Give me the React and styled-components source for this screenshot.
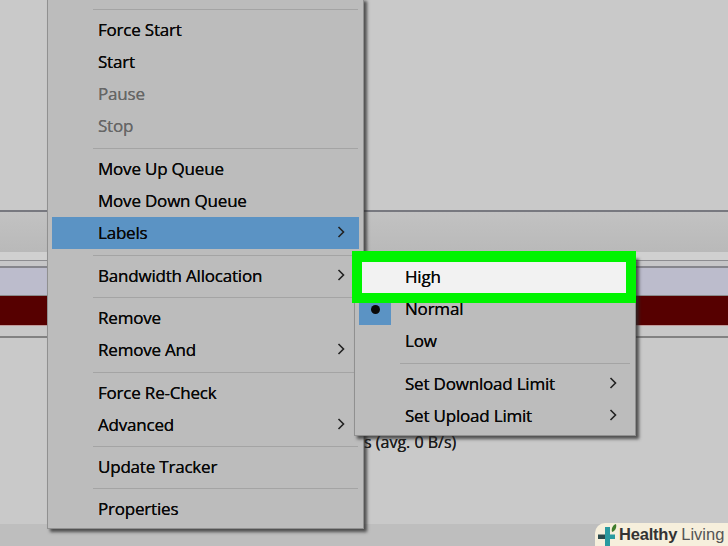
import React from "react";
import styled, { createGlobalStyle } from "styled-components";

const Global = createGlobalStyle`
  html, body { margin: 0; padding: 0; background: #c8c8c8; }
`;
const Page = styled.div`
  position: relative; width: 728px; height: 546px; overflow: hidden;
  display: flex; flex-direction: column; background: #c9c9c9;
  font-family: "Open Sans", "Noto Sans", sans-serif;
`;
const TopArea = styled.div`height: 210px; background: #c9c9c9;`;
const Rule = styled.div`height: ${p => p.$h || 2}px; background: ${p => p.$c || "#77787f"};`;
const Toolbar = styled.div`height: 40px; background: linear-gradient(#c2c2c2, #b9b9b9);`;
const Gap = styled.div`height: ${p => p.$h}px; background: ${p => p.$c};`;
const Fill = styled.div`flex: 1; background: #c9c9c9;`;
const Footer = styled.div`height: 22px; background: #bebebe;`;

const Menu = styled.div`
  position: absolute; left: ${p => p.$x}px; top: ${p => p.$y}px; width: ${p => p.$w}px;
  box-sizing: border-box; padding: 4px 4px 3px; background: #bcbcbc;
  border: 1px solid #909090;
  box-shadow: 3px 3px 3px rgba(40,40,40,.75);
`;
const Item = styled.div`
  position: relative; height: 32px; display: flex; align-items: center;
  justify-content: space-between; box-sizing: border-box;
  padding: 0 14px 2px ${p => p.$indent}px;
  font-size: 17px; letter-spacing: -0.2px; color: ${p => p.$off ? "#666" : "#080808"};
  text-shadow: 0 0 0.6px ${p => p.$off ? "#666" : "#080808"};
  background: ${p => p.$active ? "#5b93c4" : "transparent"};
`;
const Sep = styled.div`
  height: ${p => p.$h}px; box-sizing: border-box; padding-top: 1px;
  display: flex; align-items: center;
  margin-left: ${p => p.$indent - 5}px; margin-right: 1px;
  &::after { content: ""; flex: 1; height: 1px; background: #a4a4a4; }
`;
const Chevron = () => (
  <svg width="8" height="12" viewBox="0 0 8 12" fill="none" stroke="#222" strokeWidth="1.6"><path d="M1.5 1l5 5-5 5" /></svg>
);
const Bullet = styled.span`
  position: absolute; left: 0; top: 0; width: 32px; height: 32px; background: #5b93c4;
  display: flex; align-items: center; justify-content: center;
  &::after { content: ""; width: 9px; height: 9px; border-radius: 50%; background: #0a0a0a; }
`;
const Callout = styled.div`
  position: absolute; left: 352px; top: 251px; width: 284px; height: 52px;
  box-sizing: border-box; border: 10px solid #00f400; border-top-width: 11px;
  background: #f2f2f2; display: flex; align-items: center; padding: 0 0 2px 43px;
  font-size: 17px; letter-spacing: -0.2px; color: #080808;
  text-shadow: 0 0 0.6px #080808;
`;
const Stray = styled.div`
  position: absolute; left: 364px; top: 431px; font-size: 16px; color: #1c1c1c;
  text-shadow: 0 0 0.5px #1c1c1c;
`;
const Badge = styled.div`
  position: absolute; right: 0; bottom: 0; width: 133px; height: 23px;
  display: flex; align-items: center; padding-left: 3px; box-sizing: border-box;
  background: #f6efdc; border-top-left-radius: 10px;
  font-family: "Liberation Sans", Arial, sans-serif; font-size: 16.5px;
`;
const Strong = styled.b`font-weight: 700; color: #333; letter-spacing: -0.2px; margin-left: 1px;`;
const Light = styled.span`color: #555; margin-left: 4px;`;

const main = [
  11, ["Force Start"], ["Start"], ["Pause", 1], ["Stop", 1], 11,
  ["Move Up Queue"], ["Move Down Queue"], ["Labels", 0, 1, 1], 11,
  ["Bandwidth Allocation", 0, 1], 10, ["Remove"], ["Remove And", 0, 1], 11,
  ["Force Re-Check"], ["Advanced", 0, 1], 10, ["Update Tracker"], 10, ["Properties"],
];
const sub = [
  ["High"], ["Normal", 0, 0, 0, 1], ["Low"], 11,
  ["Set Download Limit", 0, 1], ["Set Upload Limit", 0, 1],
];

function Rows({ rows, indent }) {
  return rows.map((r, i) =>
    typeof r === "number" ? <Sep key={i} $indent={indent} $h={r} /> : (
      <Item key={i} $indent={indent} $off={r[1]} $active={r[3]}>
        {r[4] ? <Bullet /> : null}
        <span>{r[0]}</span>
        {r[2] ? <Chevron /> : null}
      </Item>
    ));
}

export default function App() {
  return (
    <Page>
      <Global />
      <TopArea />
      <Rule />
      <Toolbar />
      <Gap $h={8} $c="#d0d0d0" />
      <Rule $h={1} $c="#8c8c90" />
      <Gap $h={5} $c="#c6c6c8" />
      <Rule $c="#85858c" />
      <Gap $h={27} $c="#bcbccc" />
      <Rule $h={1} $c="#8a8a8a" />
      <Gap $h={29} $c="#560000" />
      <Rule $h={1} $c="#c09a9a" />
      <Gap $h={10} $c="#c8c8c8" />
      <Rule $c="#828282" />
      <Fill />
      <Footer />
      <Stray>s (avg. 0 B/s)</Stray>
      <Menu $x={47} $y={-2} $w={317}><Rows rows={main} indent={46} /></Menu>
      <Menu $x={354} $y={256} $w={282}><Rows rows={sub} indent={46} /></Menu>
      <Callout>High</Callout>
      <Badge>
        <svg width="20" height="22" viewBox="0 0 20 22">
          <path d="M0 10.5h7V15H0z" fill="#2b4a4c" />
          <path d="M7 3h5v7.5h5V15h-5v7H7z" fill="#2a9aa0" />
          <path d="M14 8c-1-4 1-7 4-8 1 4-1 7-4 8z" fill="#3f7d2c" />
        </svg>
        <Strong>Healthy</Strong><Light>Living</Light>
      </Badge>
    </Page>
  );
}
